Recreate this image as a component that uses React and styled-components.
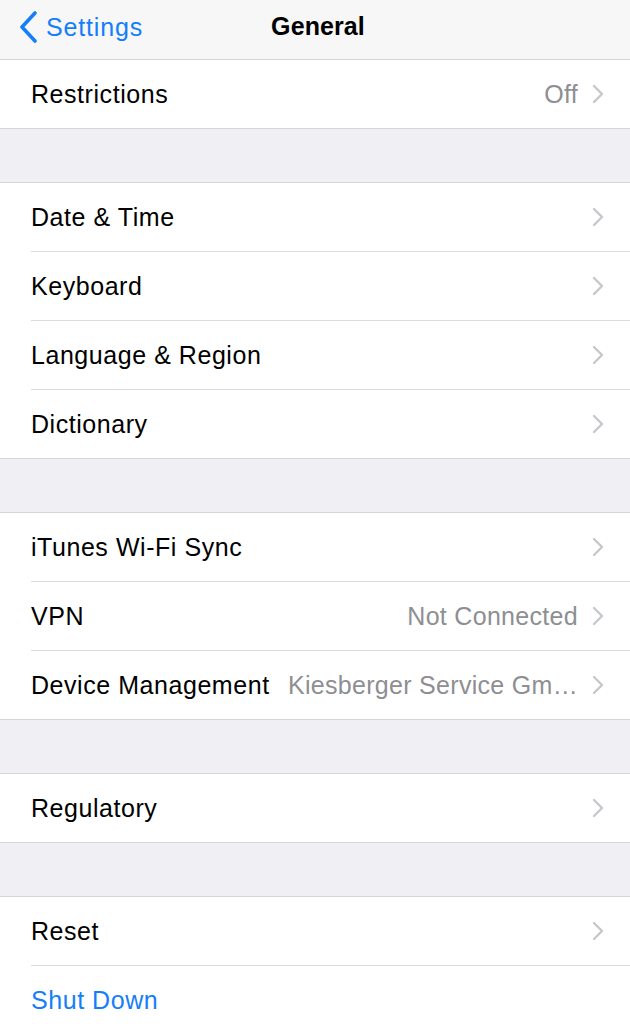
import styled, { createGlobalStyle } from "styled-components";

const GlobalStyle = createGlobalStyle`
  html, body {
    margin: 0;
    padding: 0;
    background: #efeff4;
    font-family: "Liberation Sans", Arial, sans-serif;
    -webkit-font-smoothing: antialiased;
  }
`;

const Screen = styled.div`
  width: 630px;
  min-height: 1024px;
  background: #efeff4;
  overflow: hidden;
`;

const NavBar = styled.header`
  position: relative;
  height: 59px;
  background: #f7f7f7;
  border-bottom: 1px solid #d6d6da;
  display: flex;
  align-items: center;
  justify-content: center;
`;

const BackButton = styled.button`
  position: absolute;
  left: 19px;
  top: 0;
  height: 54px;
  display: flex;
  align-items: center;
  gap: 7px;
  border: 0;
  background: none;
  padding: 0;
  color: #147efb;
  font-family: inherit;
  font-size: 25px;
  letter-spacing: 0.85px;
  cursor: pointer;
`;

const Title = styled.h1`
  margin: 0 0 6px 6px;
  font-size: 25px;
  font-weight: 700;
  color: #000;
  letter-spacing: 0.1px;
`;

const Group = styled.section`
  background: #fff;
  border-top: ${(p) => (p.$flush ? "0" : "1px solid #d6d6da")};
  border-bottom: 1px solid #d6d6da;
  margin-top: ${(p) => (p.$flush ? "0" : "53px")};
`;

const Row = styled.div`
  padding-left: 31px;
  display: flex;
  & + & > div {
    border-top: 1px solid #dcdce0;
  }
`;

const RowInner = styled.div`
  flex: 1;
  min-width: 0;
  height: 68px;
  display: flex;
  align-items: center;
  padding-right: 26px;
`;

const Label = styled.span`
  font-size: 25px;
  letter-spacing: 0.55px;
  color: ${(p) => (p.$action ? "#147efb" : "#000")};
  white-space: nowrap;
  flex-shrink: 0;
`;

const Value = styled.span`
  flex: 1;
  min-width: 0;
  margin-left: 14px;
  text-align: right;
  font-size: 25px;
  letter-spacing: 0.3px;
  color: #8e8e93;
  white-space: nowrap;
  overflow: hidden;
  text-overflow: ellipsis;
`;

const Chevron = () => (
  <svg width="12" height="20" viewBox="0 0 12 20" style={{ marginLeft: 14, flexShrink: 0 }}>
    <polyline points="2,2 10,10 2,18" fill="none" stroke="#c7c7cc" strokeWidth="2.4" strokeLinecap="round" strokeLinejoin="round" />
  </svg>
);

const BackChevron = () => (
  <svg width="20" height="32" viewBox="0 0 20 32">
    <polyline points="16,2 3,16 16,30" fill="none" stroke="#147efb" strokeWidth="3.6" strokeLinecap="round" strokeLinejoin="round" />
  </svg>
);

const groups = [
  [{ label: "Restrictions", value: "Off" }],
  [
    { label: "Date & Time" },
    { label: "Keyboard" },
    { label: "Language & Region" },
    { label: "Dictionary" },
  ],
  [
    { label: "iTunes Wi-Fi Sync" },
    { label: "VPN", value: "Not Connected" },
    { label: "Device Management", value: "Kiesberger Service Gm…" },
  ],
  [{ label: "Regulatory" }],
  [{ label: "Reset" }, { label: "Shut Down", action: true }],
];

export default function App() {
  return (
    <Screen>
      <GlobalStyle />
      <NavBar>
        <BackButton>
          <BackChevron />
          Settings
        </BackButton>
        <Title>General</Title>
      </NavBar>
      {groups.map((items, gi) => (
        <Group key={gi} $flush={gi === 0}>
          {items.map((item) => (
            <Row key={item.label}>
              <RowInner>
                <Label $action={item.action}>{item.label}</Label>
                <Value>{item.value}</Value>
                {!item.action && <Chevron />}
              </RowInner>
            </Row>
          ))}
        </Group>
      ))}
    </Screen>
  );
}
